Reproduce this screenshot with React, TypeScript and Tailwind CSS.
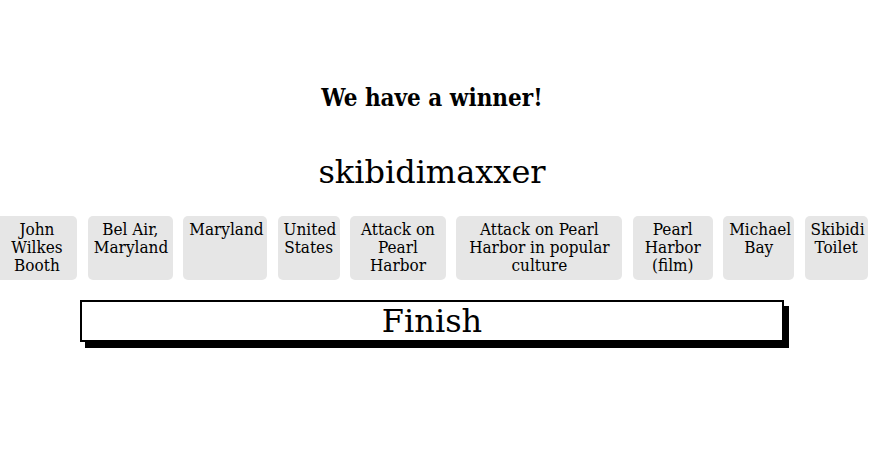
import React from "react";

const chips: { label: string; w: string }[] = [
  { label: "John Wilkes Booth", w: "w-[81px]" },
  { label: "Bel Air, Maryland", w: "w-[85px]" },
  { label: "Maryland", w: "w-[84px]" },
  { label: "United States", w: "w-[62px]" },
  { label: "Attack on Pearl Harbor", w: "w-[96px]" },
  { label: "Attack on Pearl Harbor in popular culture", w: "w-[166px]" },
  { label: "Pearl Harbor (film)", w: "w-[80px]" },
  { label: "Michael Bay", w: "w-[71px]" },
  { label: "Skibidi Toilet", w: "w-[63px]" },
];

export default function App() {
  return (
    <div className="w-[864px] h-[451px] bg-white text-black font-['DejaVu_Serif',serif] flex flex-col items-center pt-[84px]">
      <h2 className="text-[24px] leading-[28px] font-bold font-['DejaVu_Serif_Condensed','DejaVu_Serif',serif]">
        We have a winner!
      </h2>
      <h1 className="mt-[41px] text-[32px] leading-[38px]">skibidimaxxer</h1>
      <div className="mt-[25px] w-[864px] flex justify-center gap-[10.4px]">
        {chips.map((c) => (
          <div
            key={c.label}
            className={`${c.w} shrink-0 bg-[#e6e6e6] rounded-[5px] px-[6px] py-[4px] h-[64px] text-center text-[17px] leading-[18px] font-['DejaVu_Serif_Condensed','DejaVu_Serif',serif]`}
          >
            {c.label}
          </div>
        ))}
      </div>
      <button className="mt-[20px] w-[704px] h-[42px] border-2 border-black bg-white shadow-[5px_6px_0_0_#000] text-[32px] leading-none flex items-center justify-center">
        Finish
      </button>
    </div>
  );
}
